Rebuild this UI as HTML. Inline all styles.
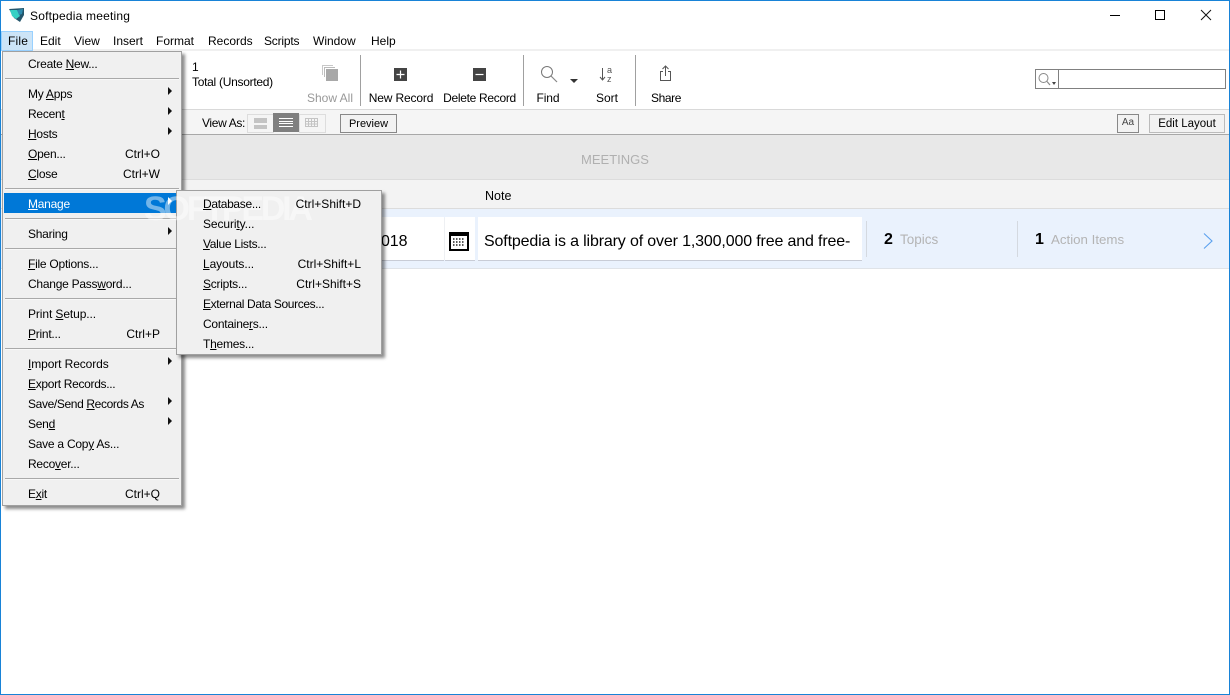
<!DOCTYPE html>
<html><head><meta charset="utf-8"><title>Softpedia meeting</title>
<style>
html,body{margin:0;padding:0;background:#fff}
#w{position:relative;width:1230px;height:695px;overflow:hidden;background:#fff;font-family:"Liberation Sans",sans-serif;font-size:12px;color:#000}
#w div{position:absolute}
.t{position:absolute;white-space:nowrap;line-height:16px;height:16px}
.r{position:absolute;white-space:nowrap;line-height:16px;height:16px;text-align:right;letter-spacing:0}
.c{position:absolute;white-space:nowrap;line-height:16px;height:16px;text-align:center}
u{text-underline-offset:1px}
.sep{left:5px;width:174px;height:1px;background:#a9a9a9;box-shadow:0 1px 0 #f8f8f8}
.arr{width:0;height:0;border-left:4px solid #111;border-top:4px solid transparent;border-bottom:4px solid transparent;left:168px}
.dv{width:1px;background:#a0a0a0}
.m{left:0;top:0;width:0;height:0;letter-spacing:-.25px}
svg{position:absolute;overflow:visible}
</style></head><body><div id="w">

<!-- toolbars and bands -->
<div style="left:0;top:49px;width:1230px;height:2px;background:#f0f0f0"></div>
<div style="left:0;top:109px;width:1230px;height:1px;background:#d9d9d9"></div>
<div style="left:0;top:110px;width:1230px;height:24px;background:#f5f5f5"></div>
<div style="left:0;top:134px;width:1230px;height:1px;background:#a8a8a8"></div>
<div style="left:0;top:135px;width:1230px;height:44px;background:#e8e8e8"></div>
<div style="left:0;top:179px;width:1230px;height:1px;background:#dcdcdc"></div>
<div style="left:0;top:180px;width:1230px;height:28px;background:#f3f3f3"></div>
<div style="left:0;top:208px;width:1230px;height:1px;background:#dcdcdc"></div>
<div style="left:0;top:209px;width:1230px;height:59px;background:#eaf2fd"></div>
<div style="left:0;top:268px;width:1230px;height:1px;background:#dfe3e8"></div>

<!-- title bar -->
<svg style="left:9px;top:7px" width="16" height="16" viewBox="0 0 16 16"><path d="M0 2 L15 1 L15 8 L11 15 L5 11 Z" fill="#24566c"/><path d="M1 3 L8 3 L11 9 L7 12 L3 9 Z" fill="#35d0c4"/><path d="M8 3 L14 2 L13 7 L10 8 Z" fill="#2f8db0"/></svg>
<span class="t" style="left:30px;top:8px;letter-spacing:.2px">Softpedia meeting</span>
<div style="left:1110px;top:15px;width:10px;height:1px;background:#000"></div>
<div style="left:1155px;top:10px;width:8px;height:8px;border:1px solid #000"></div>
<svg style="left:1201px;top:10px" width="10" height="10" viewBox="0 0 10 10"><path d="M0 0L10 10M10 0L0 10" stroke="#111" stroke-width="1" fill="none"/></svg>

<!-- menu bar -->
<div style="left:1px;top:31px;width:30px;height:18px;background:#cce4f7;border:1px solid #99d1ff"></div>
<span class="t" style="left:8px;top:33px;letter-spacing:.2px">File</span>
<span class="t" style="left:40px;top:33px">Edit</span>
<span class="t" style="left:74px;top:33px">View</span>
<span class="t" style="left:113px;top:33px">Insert</span>
<span class="t" style="left:156px;top:33px">Format</span>
<span class="t" style="left:208px;top:33px">Records</span>
<span class="t" style="left:264px;top:33px;letter-spacing:-.2px">Scripts</span>
<span class="t" style="left:313px;top:33px">Window</span>
<span class="t" style="left:371px;top:33px">Help</span>

<!-- toolbar -->
<span class="t" style="left:192px;top:59px">1</span>
<span class="t" style="left:192px;top:74px;letter-spacing:-.28px">Total (Unsorted)</span>
<svg style="left:321px;top:64px" width="18" height="18" viewBox="0 0 18 18"><path d="M1.500 11V1.500H12" stroke="#c8c8c8" fill="none"/><path d="M3.500 13V3.500H14" stroke="#bbb" fill="none"/><rect x="5" y="5" width="12" height="12" fill="#a8a8a8"/></svg>
<span class="c" style="left:300px;width:60px;top:90px;color:#999">Show All</span>
<div class="dv" style="left:360px;top:55px;height:51px"></div>
<svg style="left:394px;top:68px" width="13" height="13" viewBox="0 0 13 13"><rect width="13" height="13" fill="#444"/><path d="M6.500 2.500v8M2.500 6.500h8" stroke="#fff" stroke-width="1.200"/></svg>
<span class="c" style="left:365px;width:72px;top:90px;letter-spacing:-.15px">New Record</span>
<svg style="left:473px;top:68px" width="13" height="13" viewBox="0 0 13 13"><rect width="13" height="13" fill="#444"/><path d="M2.500 6.500h8" stroke="#fff" stroke-width="1.200"/></svg>
<span class="c" style="left:440px;width:79px;top:90px;letter-spacing:-.3px">Delete Record</span>
<div class="dv" style="left:523px;top:55px;height:51px"></div>
<svg style="left:540px;top:65px" width="18" height="18" viewBox="0 0 18 18"><circle cx="7" cy="7" r="5.500" fill="none" stroke="#777" stroke-width="1"/><path d="M11 11L17 17" stroke="#888" stroke-width="1.200"/></svg>
<div style="left:570px;top:79px;width:0;height:0;border-left:4px solid transparent;border-right:4px solid transparent;border-top:4px solid #333"></div>
<span class="c" style="left:528px;width:40px;top:90px;letter-spacing:-.1px">Find</span>
<svg style="left:599px;top:66px" width="16" height="16" viewBox="0 0 16 16"><path d="M3.500 2v12M1 11l2.500 3L6 11" stroke="#555" fill="none"/></svg>
<span class="t" style="left:607px;top:62px;font-size:9px;color:#555">a</span>
<span class="t" style="left:607px;top:71px;font-size:9px;color:#555">z</span>
<span class="c" style="left:587px;width:40px;top:90px">Sort</span>
<div class="dv" style="left:635px;top:55px;height:51px"></div>
<svg style="left:659px;top:65px" width="14" height="17" viewBox="0 0 14 17"><path d="M4 6.500H1.500V15.500H11.500V6.500H9M6.500 11V1M3.500 4L6.500 1L9.500 4" fill="none" stroke="#555"/></svg>
<span class="c" style="left:640px;width:52px;top:90px;letter-spacing:-.4px">Share</span>

<!-- search -->
<div style="left:1035px;top:69px;width:189px;height:18px;border:1px solid #808080;background:#fff"></div>
<div style="left:1058px;top:70px;width:1px;height:18px;background:#808080"></div>
<svg style="left:1038px;top:73px" width="16" height="13" viewBox="0 0 16 13"><circle cx="5.500" cy="5" r="4.500" fill="none" stroke="#888"/><path d="M9 8.500L12 12" stroke="#888" stroke-width="1.200"/></svg>
<div style="left:1052px;top:82px;width:0;height:0;border-left:2px solid transparent;border-right:2px solid transparent;border-top:3px solid #444"></div>

<!-- status bar -->
<span class="t" style="left:202px;top:115px;letter-spacing:-.35px">View As:</span>
<div style="left:247px;top:114px;width:25px;height:17px;border:1px solid #ddd;background:#f5f5f5"></div>
<div style="left:254px;top:118px;width:13px;height:5px;background:#c4c4c4"></div>
<div style="left:254px;top:125px;width:13px;height:4px;background:#c4c4c4"></div>
<div style="left:273px;top:113px;width:26px;height:19px;background:#7f7f7f"></div>
<svg style="left:279px;top:118px" width="14" height="9" viewBox="0 0 14 9"><path d="M0 .5h14M0 3.500h14M0 5.500h14M0 8.500h14" stroke="#fff"/></svg>
<div style="left:299px;top:114px;width:25px;height:17px;border:1px solid #ddd;background:#f5f5f5"></div>
<svg style="left:305px;top:118px" width="13" height="9" viewBox="0 0 13 9"><path d="M.5.500h12v8H.500zM.5 3.500h12M.5 6h12M3.500.500v8M6.500.500v8M9.500.500v8" stroke="#c4c4c4" fill="none"/></svg>
<div style="left:340px;top:114px;width:55px;height:17px;border:1px solid #888;background:#f2f2f2"></div>
<span class="c" style="left:340px;width:57px;top:116px;font-size:11px">Preview</span>
<div style="left:1117px;top:114px;width:20px;height:17px;border:1px solid #888;background:#f2f2f2"></div>
<span class="c" style="left:1117px;width:22px;top:115px;font-size:10px;color:#444">Aa</span>
<div style="left:1149px;top:114px;width:74px;height:17px;border:1px solid #bbb;background:#f2f2f2"></div>
<span class="c" style="left:1149px;width:76px;top:116px;font-size:11.500px">Edit Layout</span>

<!-- header -->
<span class="c" style="left:515px;width:200px;top:152px;font-size:13px;color:#b0b0b0">MEETINGS</span>
<span class="t" style="left:485px;top:188px;font-size:12.500px">Note</span>

<!-- record -->
<div style="left:183px;top:217px;width:261px;height:43px;background:#fff;border-bottom:1px solid #c8ccd6"></div>
<div style="left:445px;top:217px;width:30px;height:43px;background:#fff;border-bottom:1px solid #c8ccd6"></div>
<div style="left:444px;top:218px;width:1px;height:42px;background:#eef0f3"></div>
<span class="t" style="left:381px;top:233px;height:18px;line-height:18px;font-size:16px;letter-spacing:-.1px">018</span>
<div style="left:449px;top:232px;width:16px;height:15px;border:2px solid #000;background:#fff"></div>
<div style="left:449px;top:232px;width:20px;height:4px;background:#000"></div>
<svg style="left:453px;top:238px" width="13" height="9" viewBox="0 0 13 9"><path d="M0 1h1.500M3 1h1.500M6 1h1.500M9 1h1.500M0 4h1.500M3 4h1.500M6 4h1.500M9 4h1.500M0 7h1.500M3 7h1.500M6 7h1.500M9 7h1.500" stroke="#222" stroke-width="1.500"/></svg>
<div style="left:478px;top:217px;width:384px;height:43px;background:#fff;border-bottom:1px solid #c8ccd6"></div>
<span class="t" style="left:484px;top:233px;height:18px;line-height:18px;font-size:16px;letter-spacing:-.15px">Softpedia is a library of over 1,300,000 free and free-</span>
<div style="left:866px;top:221px;width:1px;height:36px;background:#d4d9e0"></div>
<span class="t" style="left:884px;top:232px;font-size:16px;font-weight:bold">2</span>
<span class="t" style="left:900px;top:232px;font-size:13.500px;color:#b4b4b4">Topics</span>
<div style="left:1017px;top:221px;width:1px;height:36px;background:#d4d9e0"></div>
<span class="t" style="left:1035px;top:232px;font-size:16px;font-weight:bold">1</span>
<span class="t" style="left:1051px;top:232px;font-size:13.300px;color:#b4b4b4">Action Items</span>
<svg style="left:1203px;top:233px" width="10" height="16" viewBox="0 0 10 16"><path d="M1 .5L9 8L1 15.500" fill="none" stroke="#5aa0ee" stroke-width="1.100"/></svg>

<!-- file menu -->
<div style="left:2px;top:51px;width:178px;height:453px;background:#f0f0f0;border:1px solid #a0a0a0;box-shadow:3px 3px 3px rgba(0,0,0,.45)"></div>
<div class="m">
<span class="t" style="left:28px;top:56px">Create <u>N</u>ew...</span>
<div class="sep" style="top:78px"></div>
<span class="t" style="left:28px;top:86px">My <u>A</u>pps</span><div class="arr" style="top:87px"></div>
<span class="t" style="left:28px;top:106px">Recen<u>t</u></span><div class="arr" style="top:107px"></div>
<span class="t" style="left:28px;top:126px"><u>H</u>osts</span><div class="arr" style="top:127px"></div>
<span class="t" style="left:28px;top:146px"><u>O</u>pen...</span><span class="r" style="right:-160px;top:146px">Ctrl+O</span>
<span class="t" style="left:28px;top:166px"><u>C</u>lose</span><span class="r" style="right:-160px;top:166px">Ctrl+W</span>
<div class="sep" style="top:188px"></div>
<div style="left:4px;top:193px;width:172px;height:20px;background:#0078d7"></div>
<span class="t" style="left:28px;top:196px;color:#fff"><u>M</u>anage</span><div class="arr" style="top:197px;border-left-color:#fff"></div>
<div class="sep" style="top:218px"></div>
<span class="t" style="left:28px;top:226px">Sharin<u>g</u></span><div class="arr" style="top:227px"></div>
<div class="sep" style="top:248px"></div>
<span class="t" style="left:28px;top:256px"><u>F</u>ile Options...</span>
<span class="t" style="left:28px;top:276px">Change Pass<u>w</u>ord...</span>
<div class="sep" style="top:298px"></div>
<span class="t" style="left:28px;top:306px;letter-spacing:-.1px">Print <u>S</u>etup...</span>
<span class="t" style="left:28px;top:326px"><u>P</u>rint...</span><span class="r" style="right:-160px;top:326px">Ctrl+P</span>
<div class="sep" style="top:348px"></div>
<span class="t" style="left:28px;top:356px;letter-spacing:-.1px"><u>I</u>mport Records</span><div class="arr" style="top:357px"></div>
<span class="t" style="left:28px;top:376px;letter-spacing:-.32px"><u>E</u>xport Records...</span>
<span class="t" style="left:28px;top:396px;letter-spacing:-.37px">Save/Send <u>R</u>ecords As</span><div class="arr" style="top:397px"></div>
<span class="t" style="left:28px;top:416px">Sen<u>d</u></span><div class="arr" style="top:417px"></div>
<span class="t" style="left:28px;top:436px">Save a Cop<u>y</u> As...</span>
<span class="t" style="left:28px;top:456px">Reco<u>v</u>er...</span>
<div class="sep" style="top:478px"></div>
<span class="t" style="left:28px;top:486px">E<u>x</u>it</span><span class="r" style="right:-160px;top:486px">Ctrl+Q</span>

<!-- submenu -->
<div style="left:176px;top:190px;width:204px;height:163px;background:#f0f0f0;border:1px solid #a0a0a0;box-shadow:3px 3px 3px rgba(0,0,0,.45)"></div>

<!-- watermark, drawn under the submenu text -->
<span class="t" style="left:144px;top:190px;height:38px;line-height:38px;font-size:34px;font-weight:bold;color:rgba(255,255,255,.45);letter-spacing:-3.200px">SOFTPEDIA</span>

<span class="t" style="left:203px;top:196px;letter-spacing:-.32px"><u>D</u>atabase...</span><span class="r" style="right:-361px;top:196px">Ctrl+Shift+D</span>
<span class="t" style="left:203px;top:216px;letter-spacing:-.1px">Securi<u>t</u>y...</span>
<span class="t" style="left:203px;top:236px;letter-spacing:-.32px"><u>V</u>alue Lists...</span>
<span class="t" style="left:203px;top:256px;letter-spacing:-.1px"><u>L</u>ayouts...</span><span class="r" style="right:-361px;top:256px">Ctrl+Shift+L</span>
<span class="t" style="left:203px;top:276px"><u>S</u>cripts...</span><span class="r" style="right:-361px;top:276px">Ctrl+Shift+S</span>
<span class="t" style="left:203px;top:296px;letter-spacing:-.37px"><u>E</u>xternal Data Sources...</span>
<span class="t" style="left:203px;top:316px">Containe<u>r</u>s...</span>
<span class="t" style="left:203px;top:336px">T<u>h</u>emes...</span>
</div>

<!-- window border -->
<div style="left:0;top:0;width:1228px;height:693px;border:1px solid #1883d7;pointer-events:none"></div>
</div></body></html>
